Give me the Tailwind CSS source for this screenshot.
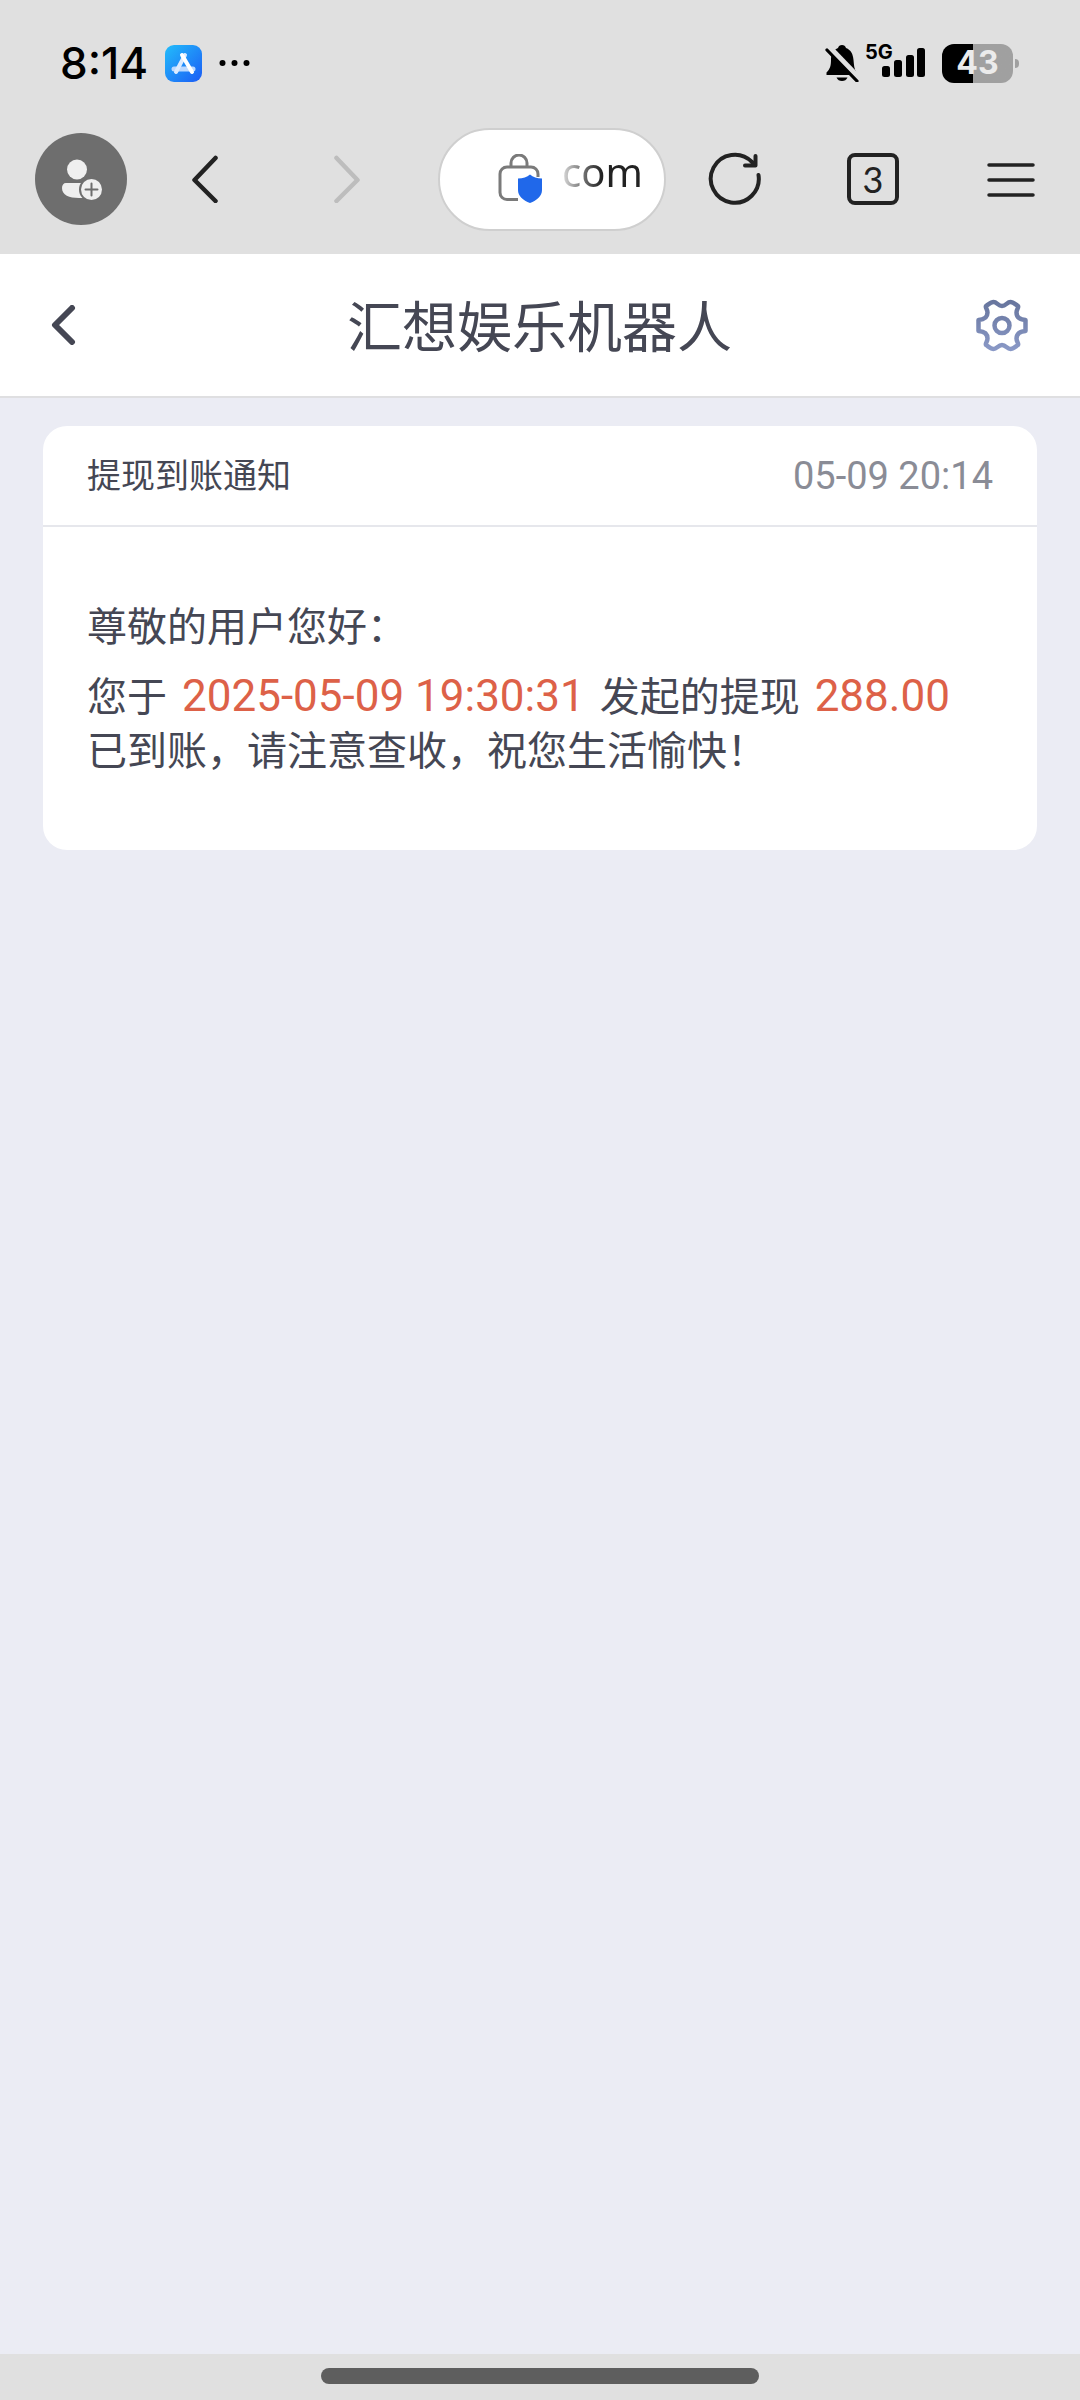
<!DOCTYPE html>
<html lang="zh-CN">
<head>
  <meta charset="UTF-8" />
  <meta name="viewport" content="width=device-width, initial-scale=1.0" />
  <title>汇想娱乐机器人</title>
  <script src="https://cdn.jsdelivr.net/npm/@tailwindcss/browser@4"></script>
</head>
<body class="bg-[#ebecf4] text-[#454754] font-['Noto_Sans_CJK_SC',sans-serif]">
  <div class="min-h-screen flex flex-col">
    <!-- 浏览器顶部 -->
    <div class="bg-[#e0e0e0] text-black">
      <!-- 状态栏 -->
      <div class="h-[126px] pl-[60px] pr-[61px] flex items-center">
        <span class="w-[105px] text-[44px] leading-none font-medium font-[Inter,sans-serif]">8:14</span>
        <svg class="w-[37px] h-[37px]" viewBox="0 0 37 37" fill="none">
          <defs>
            <linearGradient id="store" x1="0" y1="0" x2="1" y2="1">
              <stop offset="0" stop-color="#22bdfb" />
              <stop offset="1" stop-color="#1c5cf5" />
            </linearGradient>
          </defs>
          <rect width="37" height="37" rx="9" fill="url(#store)" />
          <path d="M9 24H28" stroke="#bcd9ff" stroke-width="5" stroke-linecap="round" />
          <path d="M20 10L11 27" stroke="#dcebff" stroke-width="4" stroke-linecap="round" />
          <path d="M17 10L27 27" stroke="#fff" stroke-width="4" stroke-linecap="round" />
        </svg>
        <svg class="w-[34px] h-[8px] ml-4" viewBox="0 0 34 8">
          <circle cx="4.500" cy="4" r="3" />
          <circle cx="16.500" cy="4" r="3" />
          <circle cx="28.500" cy="4" r="3" />
        </svg>
        <div class="ml-auto flex items-center">
          <svg class="w-[34px] h-[38px]" viewBox="0 0 34 38">
            <path d="M17 1c-2 0-3.500 1-4 3C7.500 6 6 11 6 16c0 6-1 9-4.500 12.500V31h30v-2.500C29 25 29 21 28.500 16c-.5-6-2.500-10-7.500-12-.5-2-2-3-4-3z" />
            <path d="M11.500 33.500h11c-1 2.500-3 3.500-5.500 3.500s-4.500-1-5.500-3.500z" />
            <path d="M4 4L33 34" stroke="#e0e0e0" stroke-width="7" />
            <path d="M2 6L32 37" stroke="#000" stroke-width="3.200" stroke-linecap="round" />
          </svg>
          <div class="relative w-[61px] h-[34px] ml-[6px]">
            <svg class="w-full h-full" viewBox="0 0 61 34">
              <rect x="17" y="20" width="8" height="11" rx="2.500" />
              <rect x="29" y="14" width="8" height="17" rx="2.500" />
              <rect x="41" y="9" width="8" height="22" rx="2.500" />
              <rect x="52" y="2" width="8" height="29" rx="2.500" />
            </svg>
            <span class="absolute left-0 -top-1 text-[20px] leading-5 font-bold font-[Inter,sans-serif]">5G</span>
          </div>
          <div class="ml-4 w-[71px] h-[39px] rounded-xl flex items-center justify-center bg-linear-to-r from-black from-43% to-[#a0a0a0] to-43% text-[#ebebeb] text-[32px] leading-none font-bold font-[Inter,sans-serif]">43</div>
          <div class="ml-[2px] w-[4px] h-[9px] rounded-r-full bg-[#a0a0a0]"></div>
        </div>
      </div>

      <!-- 工具栏 -->
      <div class="h-[128px] pl-[35px] pb-[22px] flex items-center text-[#222]">
        <button aria-label="账号" class="w-[92px] h-[92px] mr-[7px] rounded-full bg-[#6e6e6e]">
          <svg class="w-[92px] h-[92px]" viewBox="0 0 92 92">
            <circle cx="42" cy="36.500" r="10" fill="#efefef" />
            <path d="M31 50h22v15H44c-10 0-17-3-17-10 0-3 1.500-5 4-5z" fill="#efefef" />
            <circle cx="56.500" cy="56.500" r="12.500" fill="#6e6e6e" />
            <circle cx="56.500" cy="56.500" r="10.500" fill="#efefef" />
            <path d="M50.500 56.500h12M56.500 50.500v12" stroke="#6e6e6e" stroke-width="2" stroke-linecap="round" />
          </svg>
        </button>
        <button aria-label="后退" class="w-[142px] h-[92px] flex items-center justify-center">
          <svg class="w-[26px] h-[48px]" viewBox="0 0 26 48" fill="none" stroke="currentColor" stroke-width="4.500" stroke-linecap="round" stroke-linejoin="round">
            <path d="M23.500 3L2.500 25L23.500 46" />
          </svg>
        </button>
        <button aria-label="前进" class="w-[142px] h-[92px] flex items-center justify-center text-[#bdbdbd]">
          <svg class="w-[26px] h-[48px]" viewBox="0 0 26 48" fill="none" stroke="currentColor" stroke-width="4.500" stroke-linecap="round" stroke-linejoin="round">
            <path d="M2.500 3L23.500 25L2.500 46" />
          </svg>
        </button>
        <div class="flex-1 min-w-0 h-[103px] ml-5 pl-[58px] flex items-center bg-white border-2 border-[#cfcfcf] rounded-full">
          <svg class="shrink-0 w-[44px] h-[50px]" viewBox="0 0 44 50" fill="none">
            <path d="M13 13V9a8 8 0 0 1 16 0v4" stroke="#7a7a7a" stroke-width="3" />
            <path d="M20 45.500H9a7 7 0 0 1-7-7V20a7 7 0 0 1 7-7h24a7 7 0 0 1 7 7v3" stroke="#7a7a7a" stroke-width="3" />
            <path d="M32 20.500c3 2.500 7 4 12 4V36c0 6-5 10.500-12 13-7-2.500-12-7-12-13V24.500c5 0 9-1.500 12-4z" fill="#2068ea" />
          </svg>
          <input type="text" value="com" aria-label="网址" class="min-w-0 w-[100px] h-[60px] ml-[20px] mb-4 bg-linear-to-r from-[#ddd] to-[#222] to-40% bg-clip-text text-transparent text-[40px] leading-none font-['Noto_Sans',sans-serif]" />
        </div>
        <button aria-label="刷新" class="w-[138px] h-[92px] flex items-center justify-center">
          <svg class="w-[54px] h-[54px]" viewBox="0 0 54 54" fill="none" stroke="currentColor" stroke-width="4" stroke-linecap="round" stroke-linejoin="round">
            <path d="M50.500 23A24 24 0 1 1 44 10L47 13" />
            <path d="M47.500 4V13.500H37" />
          </svg>
        </button>
        <button aria-label="标签页" class="w-[138px] h-[92px] flex items-center justify-center">
          <span class="w-[52px] h-[52px] flex items-center justify-center border-4 border-[#222] rounded-lg text-[36px] leading-none font-[Lato,sans-serif]">3</span>
        </button>
        <button aria-label="菜单" class="w-[138px] h-[92px] flex items-center justify-center">
          <svg class="w-[48px] h-[36px]" viewBox="0 0 48 36" stroke="currentColor" stroke-width="3.500" stroke-linecap="round">
            <path d="M2 4H46M2 19H46M2 34H46" />
          </svg>
        </button>
      </div>
    </div>

    <!-- 页面标题 -->
    <header class="h-[144px] pl-[51px] pr-[52px] flex items-center justify-between bg-white border-b-2 border-[#dfdfe1]">
      <button aria-label="返回" class="w-[52px] h-[53px]">
        <svg class="w-[25px] h-[40px]" viewBox="0 0 25 40" fill="none" stroke="currentColor" stroke-width="6" stroke-linecap="round" stroke-linejoin="round">
          <path d="M21 3L4 20L21 37" />
        </svg>
      </button>
      <h1 class="pb-1 text-[55px] leading-none">汇想娱乐机器人</h1>
      <button aria-label="设置" class="w-[52px] h-[53px]">
        <svg class="w-[52px] h-[53px]" viewBox="0 0 52 53" fill="none" stroke="url(#gear)" stroke-linejoin="round">
          <defs>
            <linearGradient id="gear" gradientUnits="userSpaceOnUse" x1="26" y1="0" x2="26" y2="53">
              <stop offset="0" stop-color="#66749c" />
              <stop offset="1" stop-color="#8b9ac8" />
            </linearGradient>
          </defs>
          <path stroke-width="4.500" d="M17.500 3C21 3 22 7 26 7C30 7 31 3 34.500 3C37 3 39 5 42 7C43 8.500 40.500 10 40.500 13.500C40.500 17.500 43 20.500 49.500 21V32C43 32.500 40.500 35.500 40.500 39.500C40.500 43 43 44.500 42 46C39 48 37 50 34.500 50C31 50 30 46 26 46C22 46 21 50 17.500 50C15 50 13 48 10 46C9 44.500 11.500 43 11.500 39.500C11.500 35.500 9 32.500 2.500 32V21C9 20.500 11.500 17.500 11.500 13.500C11.500 10 9 8.500 10 7C13 5 15 3 17.500 3Z" />
          <circle cx="26" cy="26.500" r="7.500" stroke-width="4.500" />
        </svg>
      </button>
    </header>

    <!-- 通知卡片 -->
    <main class="flex-1 px-[43px] pt-[28px]">
      <article class="bg-white rounded-3xl">
        <div class="h-[101px] px-[44px] flex items-center justify-between border-b-2 border-[#e6e7ec]">
          <h2 class="pb-1 text-[34px] leading-none">提现到账通知</h2>
          <time class="text-[38px] leading-none text-[#8a8c96] font-[Roboto,sans-serif]">05-09 20:14</time>
        </div>
        <div class="px-[44px] pt-[70px] pb-[75px] text-[40px] leading-[54px]">
          <p>尊敬的用户您好：</p>
          <p class="mt-4">
            您于 <span class="mx-[6px] text-[44px] leading-none text-[#dd6148] font-[Roboto,sans-serif]">2025-05-09 19:30:31</span> 发起的提现 <span class="mx-[6px] text-[44px] leading-none text-[#dd6148] font-[Roboto,sans-serif]">288.00</span><br />
            已到账，请注意查收，祝您生活愉快！
          </p>
        </div>
      </article>
    </main>

    <!-- 底部手势条 -->
    <div class="h-[46px] pt-[14px] bg-[#e0e0e0]">
      <div class="w-[438px] h-[16px] mx-auto rounded-full bg-[#5e5e5e]"></div>
    </div>
  </div>
</body>
</html>
